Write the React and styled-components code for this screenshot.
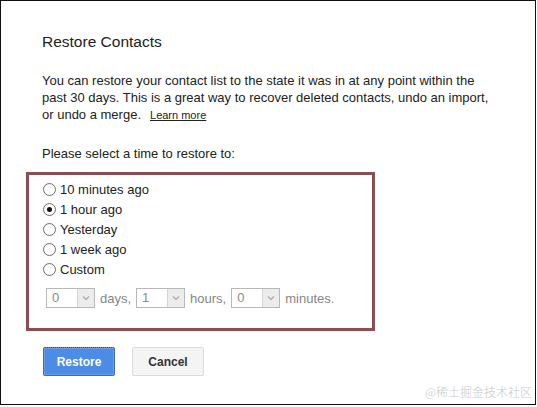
import React, {useState} from 'react';
import styled, {createGlobalStyle} from 'styled-components';

const GlobalStyle = createGlobalStyle`
  html, body {
    margin: 0;
    padding: 0;
    background: #fff;
  }
  body {
    font-family: "Liberation Sans", Arial, sans-serif;
  }
`
const Frame = styled.div`
  position: relative;
  box-sizing: border-box;
  width: 536px;
  height: 405px;
  border: 1px solid #111;
  padding: 31px 0 0 25px;
  background: #fff;
`
const Title = styled.h2`
  margin: 0 0 20px 16px;
  font-size: 15.5px;
  line-height: 20px;
  font-weight: normal;
  color: #222;
`
const Para = styled.p`
  margin: 0 0 21px 16px;
  font-size: 13px;
  line-height: 17px;
  color: #222;
  white-space: nowrap;
`
const LearnMore = styled.a`
  margin-left: 9px;
  font-size: 11px;
  color: #222;
  text-decoration: underline;
`
const Prompt = styled.div`
  margin: 0 0 10px 16px;
  font-size: 13px;
  line-height: 17px;
  color: #222;
`
const OptionsBox = styled.div`
  box-sizing: border-box;
  width: 349px;
  border: 3px solid #8d4d55;
  padding: 4px 0 20px 14px;
`
const OptionRow = styled.label`
  display: flex;
  align-items: center;
  height: 20px;
  font-size: 13px;
  color: #222;
  cursor: pointer;
`
const Radio = styled.span`
  box-sizing: border-box;
  width: 13px;
  height: 13px;
  margin-right: 4px;
  border-radius: 50%;
  border: 1px solid #6f6f6f;
  background: radial-gradient(circle at 50% 50%, #fff 55%, #e4e4e4 100%);
  display: flex;
  align-items: center;
  justify-content: center;
  &::after {
    content: "";
    width: 5px;
    height: 5px;
    border-radius: 50%;
    background: #111;
    display: ${p => (p.checked ? 'block' : 'none')};
  }
`
const CustomRow = styled.div`
  display: flex;
  align-items: center;
  gap: 5px;
  margin: 9px 0 0 3px;
  font-size: 13px;
  color: #858585;
`
const Select = styled.div`
  box-sizing: border-box;
  display: flex;
  width: 49px;
  height: 20px;
  border: 1px solid #b8b8b8;
  background: #fff;
`
const SelectValue = styled.span`
  flex: 1;
  padding-left: 5px;
  line-height: 18px;
  font-size: 13px;
  color: #8a8a8a;
`
const SelectArrow = styled.span`
  width: 16px;
  border-left: 1px solid #d4d4d4;
  background: #ececec;
  display: flex;
  align-items: center;
  justify-content: center;
`
const ButtonRow = styled.div`
  display: flex;
  gap: 17px;
  margin: 16px 0 0 17px;
`
const Button = styled.button`
  box-sizing: border-box;
  width: 72px;
  height: 29px;
  font-family: "Liberation Sans", Arial, sans-serif;
  font-size: 12px;
  font-weight: bold;
  border-radius: 2px;
  cursor: pointer;
  color: ${p => (p.primary ? '#fff' : '#333')};
  background: ${p => (p.primary ? '#4d8ce4' : '#f4f4f4')};
  border: 1px ${p => (p.primary ? 'dotted #2a4f86' : 'solid #dcdcdc')};
  outline: ${p => (p.primary ? '1px solid #6a9de6' : 'none')};
  outline-offset: -2px;
`
const Watermark = styled.div`
  position: absolute;
  right: 3px;
  bottom: 4px;
  font-size: 12px;
  color: #c8c8c8;
  font-family: "Noto Sans CJK SC", "Liberation Serif", serif;
  font-weight: 300;
`

const Chevron = () => (
  <svg width="8" height="6" viewBox="0 0 8 6">
    <path d="M1 1.5 L4 4.5 L7 1.5" fill="none" stroke="#a8a8a8" strokeWidth="1.2" />
  </svg>
)

const DropDown = ({value}) => (
  <Select>
    <SelectValue>{value}</SelectValue>
    <SelectArrow><Chevron /></SelectArrow>
  </Select>
)

const options = ['10 minutes ago', '1 hour ago', 'Yesterday', '1 week ago', 'Custom']

const App = () => {
  const [selected, setSelected] = useState(1)
  return (
    <>
      <GlobalStyle />
      <Frame>
        <Title>Restore Contacts</Title>
        <Para>
          You can restore your contact list to the state it was in at any point within the<br />
          past 30 days. This is a great way to recover deleted contacts, undo an import,<br />
          or undo a merge.
          <LearnMore href="#">Learn more</LearnMore>
        </Para>
        <Prompt>Please select a time to restore to:</Prompt>
        <OptionsBox>
          {options.map((opt, i) => (
            <OptionRow key={opt} onClick={() => setSelected(i)}>
              <Radio checked={selected === i} />
              {opt}
            </OptionRow>
          ))}
          <CustomRow>
            <DropDown value="0" />
            <span>days,</span>
            <DropDown value="1" />
            <span>hours,</span>
            <DropDown value="0" />
            <span>minutes.</span>
          </CustomRow>
        </OptionsBox>
        <ButtonRow>
          <Button primary>Restore</Button>
          <Button>Cancel</Button>
        </ButtonRow>
        <Watermark>@稀土掘金技术社区</Watermark>
      </Frame>
    </>
  )
}

export default App
